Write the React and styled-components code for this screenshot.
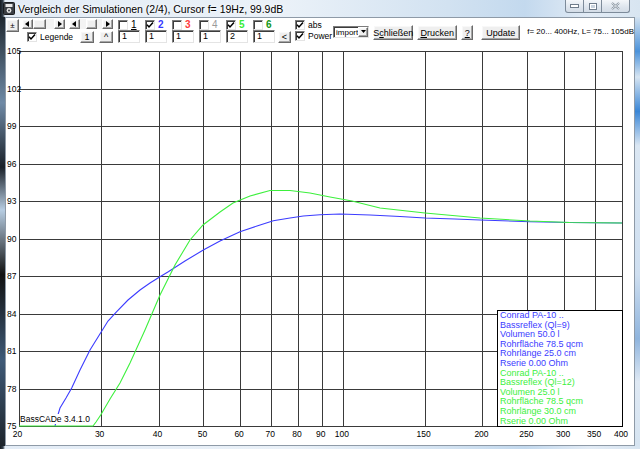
import React from "react";
import styled, { createGlobalStyle, css } from "styled-components";

const FONT = `"Liberation Sans Narrow", "Liberation Sans", Arial, sans-serif`;

const GlobalStyle = createGlobalStyle`
  html, body {
    margin: 0;
    padding: 0;
    background: #dde8f3;
  }
  body {
    font-family: ${FONT};
    color: #000;
  }
`;

const raised = css`
  box-sizing: border-box;
  background: #efefef;
  border: 1px solid;
  border-color: #fff #6a6a6a #6a6a6a #fff;
  box-shadow: inset -1px -1px 0 #a6a6a6, inset 1px 1px 0 #f8f8f8;
`;

const sunken = css`
  box-sizing: border-box;
  background: #fff;
  border: 1px solid;
  border-color: #7c7c7c #e4e4e4 #e4e4e4 #7c7c7c;
  box-shadow: inset 1px 1px 0 #3c3c3c;
`;

const Frame = styled.div`
  width: 640px;
  height: 449px;
  overflow: hidden;
  display: flex;
  flex-direction: column;
  background:
    linear-gradient(90deg, #141a20 0, #34404c 3px, transparent 5px),
    linear-gradient(90deg, #e3ecf6 0, #eaf1f8 45%, #d2e2f1 70%, #c3d9ee 82%, #e2ebf5 92%, #d8e5f1 100%);
`;

const TitleBar = styled.div`
  height: 17px;
  flex: none;
  display: flex;
  align-items: center;
`;

const AppIcon = styled.svg`
  margin-left: 3px;
  flex: none;
`;

const TitleText = styled.span`
  margin-left: 3px;
  font-size: 10.5px;
  white-space: nowrap;
  text-shadow: 0 0 5px #fff, 0 0 3px #fff;
`;

const Captions = styled.div`
  margin-left: auto;
  margin-right: 10px;
  align-self: flex-start;
  display: flex;
`;

const CapButton = styled.div`
  width: ${({ $w }) => $w}px;
  height: 13px;
  box-sizing: border-box;
  display: flex;
  align-items: center;
  justify-content: center;
  background: linear-gradient(#f4f7fa, #dfe6ee 55%, #d3dce6);
  border: 1px solid #7d8b9a;
  border-top: none;
  margin-left: -1px;
  border-radius: ${({ $r }) => $r || "0"};
`;

const Middle = styled.div`
  flex: none;
  height: 429px;
  display: flex;
`;

const LeftEdge = styled.div`
  width: 5px;
  flex: none;
  background: linear-gradient(180deg, #1f2830 0, #6f8aa6 20%, #1a2129 35%, #b7cde2 45%, #111 60%, #3f5a77 80%, #1d242b 100%);
`;

const RightEdge = styled.div`
  width: 5px;
  flex: none;
  background: linear-gradient(180deg, #d4e3f1 0, #4b92da 8%, #d7e5f2 14%, #3a86d6 22%, #dbe7f3 30%, #cfdff0 60%, #8fb4dd 75%, #dfe9f4 85%, #d6e4f1 100%);
`;

const Client = styled.div`
  width: 630px;
  flex: none;
  box-sizing: border-box;
  border: 1px solid #8e9aa7;
  background: #fff;
  display: flex;
  flex-direction: column;
`;

const Toolbar = styled.div`
  height: 26px;
  flex: none;
  display: flex;
  align-items: flex-start;
  font-size: 8.5px;
`;

const Button = styled.div`
  ${raised};
  width: ${({ $w }) => $w}px;
  height: ${({ $h }) => $h || 12}px;
  margin-top: ${({ $top }) => $top || 0}px;
  margin-left: ${({ $ml }) => $ml || 0}px;
  flex: none;
  display: flex;
  align-items: center;
  justify-content: center;
  font-size: ${({ $fs }) => $fs || 9}px;
  white-space: nowrap;
  u {
    text-decoration: underline;
  }
`;

const NavGroup = styled.div`
  margin-left: 3px;
  width: 93px;
  display: flex;
  flex-direction: column;
`;

const NavRow = styled.div`
  display: flex;
  align-items: center;
  height: ${({ $h }) => $h}px;
  margin-top: ${({ $top }) => $top}px;
  gap: ${({ $gap }) => $gap || 0}px;
`;

const Scroll = styled.div`
  width: ${({ $w }) => $w}px;
  height: 10px;
  display: flex;
  background: #f3f3f3;
`;

const ScrollPart = styled.div`
  ${raised};
  width: ${({ $w }) => $w}px;
  height: 10px;
  margin-left: ${({ $ml }) => $ml || 0}px;
  flex: none;
  display: flex;
  align-items: center;
  justify-content: center;
`;

const Spacer = styled.div`
  flex: 1;
`;

const CheckRow = styled.label`
  display: flex;
  align-items: center;
  gap: 3px;
  margin-left: ${({ $ml }) => $ml || 0}px;
  height: ${({ $h }) => $h || 11}px;
  white-space: nowrap;
`;

const Box = styled.span`
  ${sunken};
  width: 10px;
  height: 10px;
  flex: none;
  display: inline-flex;
  align-items: center;
  justify-content: center;
`;

const Caption = styled.span`
  color: ${({ $color }) => $color || "#000"};
  font-size: ${({ $fs }) => $fs || 8.5}px;
  font-weight: ${({ $bold }) => ($bold ? "bold" : "normal")};
  text-decoration: ${({ $u }) => ($u ? "underline" : "none")};
`;

const SeriesGrid = styled.div`
  margin-left: 5px;
  margin-top: 1px;
  display: grid;
  grid-template-columns: repeat(5, 27px) 25px 13px;
  grid-template-rows: 11px 13px;
  align-items: center;
`;

const NumInput = styled.div`
  ${sunken};
  width: 22px;
  height: 13px;
  padding-left: 3px;
  font-size: 9px;
  line-height: 11px;
`;

const AbsPower = styled.div`
  margin-left: 4px;
  margin-top: 1px;
  width: 33px;
  display: flex;
  flex-direction: column;
`;

const Select = styled.div`
  ${sunken};
  margin-left: 5px;
  margin-top: 8px;
  width: 38px;
  height: 12px;
  display: flex;
  align-items: center;
  padding-left: 2px;
  font-size: 8px;
`;

const DropArrow = styled.div`
  ${raised};
  margin-left: auto;
  width: 10px;
  height: 10px;
  display: flex;
  align-items: center;
  justify-content: center;
`;

const Info = styled.div`
  margin-left: 7px;
  margin-top: 9px;
  font-size: 8px;
  white-space: nowrap;
`;

const ChartArea = styled.div`
  position: relative;
  flex: 1;
`;

const Legend = styled.div`
  position: absolute;
  left: 491px;
  top: 266px;
  width: 126px;
  height: 117px;
  box-sizing: border-box;
  border: 1px solid #000;
  background: #fff;
  padding-left: 2px;
  font-size: 9px;
  line-height: 9.6px;
  overflow: hidden;
`;

const LegendLine = styled.div`
  color: ${({ $color }) => $color};
  white-space: nowrap;
`;

const Tri = ({ dir }) => (
  <svg width="5" height="6" viewBox="0 0 5 6">
    <path d={dir === "left" ? "M4 0 L4 6 L0 3 Z" : dir === "right" ? "M1 0 L1 6 L5 3 Z" : "M0 1 L5 1 L2.5 4 Z"} fill="#000" />
  </svg>
);

const Check = ({ on }) => (
  <Box>
    {on && (
      <svg width="8" height="8" viewBox="0 0 8 8">
        <path d="M1 3.8 L3 6 L7 1.5" stroke="#000" strokeWidth="1.5" fill="none" />
      </svg>
    )}
  </Box>
);

const ScrollBar = ({ w, thumbAt, thumbW }) => (
  <Scroll $w={w}>
    <ScrollPart $w={11}>
      <Tri dir="left" />
    </ScrollPart>
    <ScrollPart $w={thumbW} $ml={thumbAt} />
    <Spacer />
    <ScrollPart $w={11}>
      <Tri dir="right" />
    </ScrollPart>
  </Scroll>
);

const SERIES = [
  { n: "1", on: false, color: "#000", value: "1", u: true },
  { n: "2", on: true, color: "#3838ff", value: "1", bold: true },
  { n: "3", on: false, color: "#ff3a3a", value: "1", bold: true },
  { n: "4", on: false, color: "#9a9a9a", value: "1" },
  { n: "5", on: true, color: "#36ee36", value: "2", bold: true },
  { n: "6", on: false, color: "#149614", value: "1", bold: true },
];

const BLUE = "#3c3cff";
const GREEN = "#3df03d";

const LEGEND = [
  ["Conrad PA-10 ..", BLUE],
  ["Bassreflex (Ql=9)", BLUE],
  ["Volumen 50.0 l", BLUE],
  ["Rohrfläche 78.5 qcm", BLUE],
  ["Rohrlänge 25.0 cm", BLUE],
  ["Rserie 0.00 Ohm", BLUE],
  ["Conrad PA-10 ..", GREEN],
  ["Bassreflex (Ql=12)", GREEN],
  ["Volumen 25.0 l", GREEN],
  ["Rohrfläche 78.5 qcm", GREEN],
  ["Rohrlänge 30.0 cm", GREEN],
  ["Rserie 0.00 Ohm", GREEN],
];

// plot geometry in page pixels
const X0 = 19;
const X1 = 622;
const Y0 = 51;
const Y1 = 426;
const xOf = f => X0 + ((X1 - X0) * Math.log(f / 20)) / Math.log(20);
const yOf = db => Y0 + (105 - db) * 12.5;
const crisp = v => Math.round(v) + 0.5;

const F_GRID = [30, 40, 50, 60, 70, 80, 90, 100, 150, 200, 250, 300, 350];
const F_LABELS = [20, ...F_GRID, 400];
const DB_LABELS = [105, 102, 99, 96, 93, 90, 87, 84, 81, 78, 75];

const BLUE_PTS = [
  [55, 426], [57, 418], [60, 408], [66, 398], [71.7, 388], [80, 370], [90, 350],
  [100.7, 332.7], [108, 321], [116.7, 311.7], [128, 300], [140, 290], [150, 283],
  [160, 276.7], [168.3, 271.7], [185, 261], [203.3, 250], [220, 241], [240, 231.7],
  [257, 226], [273.3, 220.7], [290, 218], [303.3, 216], [320, 214.7], [340, 214],
  [370, 215], [400, 216.5], [425, 218], [455, 219], [480, 220], [530, 221.7],
  [570, 222.5], [622, 223],
];

const GREEN_PTS = [
  [19, 426], [93, 426], [96, 422], [100.7, 415], [110, 399], [120, 383], [130, 363],
  [145, 330], [160, 295], [175, 265], [190, 240], [203, 225], [220, 212], [233, 203],
  [250, 196], [270, 190.5], [290, 190.5], [310, 193], [330, 197], [352, 201],
  [380, 208], [425, 213], [480, 218], [530, 221], [570, 222.5], [622, 223],
];

const pts = list => list.map(([x, y]) => `${x},${y}`).join(" ");

const Chart = () => (
  <svg width="628" height="401" viewBox="6 44 628 401" style={{ display: "block" }}>
    <g stroke="#3a3a3a" strokeWidth="1" shapeRendering="crispEdges">
      {F_GRID.map(f => (
        <line key={f} x1={crisp(xOf(f))} y1={Y0} x2={crisp(xOf(f))} y2={Y1} />
      ))}
      {DB_LABELS.slice(1, -1).map(d => (
        <line key={d} x1={X0} y1={crisp(yOf(d))} x2={X1} y2={crisp(yOf(d))} />
      ))}
      <rect x={X0 + 0.5} y={Y0 + 0.5} width={X1 - X0} height={Y1 - Y0} fill="none" />
    </g>
    <polyline points={pts(BLUE_PTS)} fill="none" stroke={BLUE} strokeWidth="1.1" />
    <polyline points={pts(GREEN_PTS)} fill="none" stroke={GREEN} strokeWidth="1.1" />
    <g fontFamily={FONT} fontSize="8.5" fill="#000">
      {DB_LABELS.map(d => (
        <text key={d} x="7" y={yOf(d) + 3}>
          {d}
        </text>
      ))}
      {F_LABELS.map(f => (
        <text key={f} x={f === 20 ? 17.5 : xOf(f) - 1} y="437" textAnchor="middle">
          {f}
        </text>
      ))}
      <rect x="20" y="414" width="61" height="10" fill="#fff" />
      <text x="20" y="422">BassCADe 3.4.1.0</text>
    </g>
  </svg>
);

export default function App() {
  return (
    <>
      <GlobalStyle />
      <Frame>
        <TitleBar>
          <AppIcon width="12" height="13" viewBox="0 0 12 13">
            <rect x="0.5" y="0.5" width="11" height="12" rx="1" fill="#3b3f44" stroke="#1a1c1f" />
            <rect x="2.5" y="2" width="7" height="3" fill="#e8e8e8" />
            <circle cx="6" cy="8.5" r="2.4" fill="#e8e8e8" />
            <circle cx="6" cy="8.5" r="1" fill="#3b3f44" />
          </AppIcon>
          <TitleText>Vergleich der Simulationen (2/4), Cursor f= 19Hz, 99.9dB</TitleText>
          <Captions>
            <CapButton $w={19} $r="0 0 0 3px">
              <svg width="9" height="5" viewBox="0 0 9 5">
                <rect x="0.5" y="0.5" width="8" height="3" fill="#fff" stroke="#6f7c8b" />
              </svg>
            </CapButton>
            <CapButton $w={19}>
              <svg width="8" height="7" viewBox="0 0 8 7">
                <rect x="0.5" y="0.5" width="7" height="6" fill="#fff" stroke="#6f7c8b" />
                <rect x="2" y="2" width="4" height="3" fill="#c9d3de" />
              </svg>
            </CapButton>
            <CapButton $w={29} $r="0 0 3px 0">
              <svg width="9" height="8" viewBox="0 0 9 8">
                <path d="M1 1 L8 7 M8 1 L1 7" stroke="#7b8896" strokeWidth="2" />
                <path d="M1 1 L8 7 M8 1 L1 7" stroke="#fff" strokeWidth="0.8" />
              </svg>
            </CapButton>
          </Captions>
        </TitleBar>
        <Middle>
          <LeftEdge />
          <Client>
            <Toolbar>
              <Button $w={13} $h={13} $top={1} $fs={8}>±</Button>
              <NavGroup>
                <NavRow $h={10} $top={1} $gap={4}>
                  <ScrollBar w={43} thumbAt={0} thumbW={13} />
                  <ScrollBar w={44} thumbAt={6} thumbW={11} />
                </NavRow>
                <NavRow $h={12} $top={2}>
                  <CheckRow $ml={5} $h={12}>
                    <Check on />
                    <Caption>Legende</Caption>
                  </CheckRow>
                  <Spacer />
                  <Button $w={14}>1</Button>
                  <Button $w={14} $ml={5}>^</Button>
                </NavRow>
              </NavGroup>
              <SeriesGrid>
                {SERIES.map(s => (
                  <CheckRow key={s.n}>
                    <Check on={s.on} />
                    <Caption $color={s.color} $u={s.u} $bold={s.bold} $fs={10}>
                      {s.n}
                    </Caption>
                  </CheckRow>
                ))}
                <span />
                {SERIES.map(s => (
                  <NumInput key={s.n}>{s.value}</NumInput>
                ))}
                <Button $w={13}>&lt;</Button>
              </SeriesGrid>
              <AbsPower>
                <CheckRow>
                  <Check on />
                  <Caption>abs</Caption>
                </CheckRow>
                <CheckRow>
                  <Check on />
                  <Caption>Power</Caption>
                </CheckRow>
              </AbsPower>
              <Select>
                import
                <DropArrow>
                  <Tri dir="down" />
                </DropArrow>
              </Select>
              <Button $w={40} $h={15} $top={7} $ml={4}>
                S<u>c</u>hließen
              </Button>
              <Button $w={40} $h={15} $top={7} $ml={4}>
                <u>D</u>rucken
              </Button>
              <Button $w={12} $h={15} $top={7} $ml={4}>
                <u>?</u>
              </Button>
              <Button $w={39} $h={15} $top={7} $ml={8}>
                Update
              </Button>
              <Info>f= 20... 400Hz, L= 75... 105dB</Info>
            </Toolbar>
            <ChartArea>
              <Chart />
              <Legend>
                {LEGEND.map(([t, c], i) => (
                  <LegendLine key={i} $color={c}>
                    {t}
                  </LegendLine>
                ))}
              </Legend>
            </ChartArea>
          </Client>
          <RightEdge />
        </Middle>
      </Frame>
    </>
  );
}
